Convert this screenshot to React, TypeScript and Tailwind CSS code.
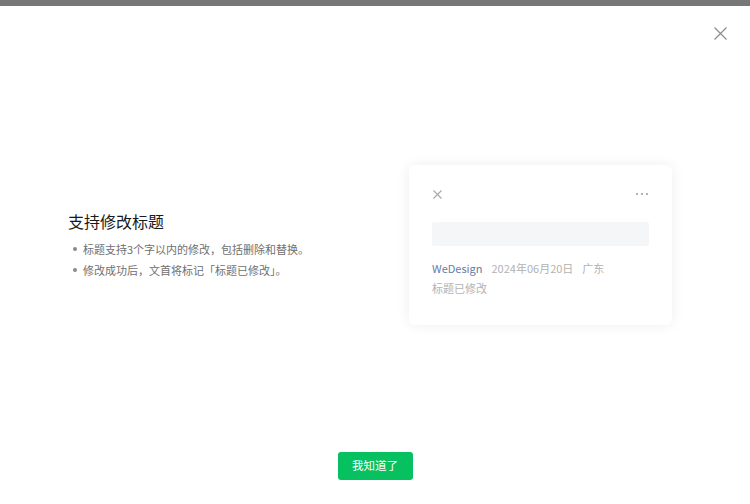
const FONT = { fontFamily: '"Noto Sans CJK SC", "Noto Sans", sans-serif' }

const TIPS = [
  '标题支持3个字以内的修改，包括删除和替换。',
  '修改成功后，文首将标记「标题已修改」。',
]

function Cross({ size, color, stroke }: { size: number; color: string; stroke: number }) {
  return (
    <svg width={size} height={size} viewBox={`0 0 ${size} ${size}`} fill="none">
      <path d={`M0.5 0.5L${size - 0.5} ${size - 0.5}M${size - 0.5} 0.5L0.5 ${size - 0.5}`} stroke={color} strokeWidth={stroke} />
    </svg>
  )
}

function PreviewCard() {
  return (
    <div className="w-[263px] rounded-[6px] bg-white pt-[24px] px-[23px] pb-[27px] shadow-[0_0_14px_rgba(0,0,0,0.07)]">
      <div className="flex items-center justify-between h-[10px]">
        <div className="ml-[1px]">
          <Cross size={9} color="#a8a8a8" stroke={1.1} />
        </div>
        <div className="flex gap-[3px] pr-[1px]">
          <span className="h-[2px] w-[2px] rounded-full bg-[#9a9a9a]" />
          <span className="h-[2px] w-[2px] rounded-full bg-[#9a9a9a]" />
          <span className="h-[2px] w-[2px] rounded-full bg-[#9a9a9a]" />
        </div>
      </div>
      <div className="mt-[23px] h-[24px] rounded-[2px] bg-[#f5f6f7]" />
      <div className="mt-[12px] text-[11px] leading-[20px]">
        <div className="flex">
          <span className="text-[#6a7ca3]">WeDesign</span>
          <span className="ml-[9px] text-[#b2b2b2]">2024年06月20日</span>
          <span className="ml-[9px] text-[#b2b2b2]">广东</span>
        </div>
        <div className="text-[#b2b2b2]">标题已修改</div>
      </div>
    </div>
  )
}

export default function App() {
  return (
    <div className="w-[750px] h-[504px] bg-white flex flex-col overflow-hidden" style={FONT}>
      <div className="h-[6px] bg-[#777777]" />

      {/* close */}
      <div className="flex justify-end pr-[23px] mt-[21px]">
        <Cross size={13} color="#8c8c8c" stroke={1.2} />
      </div>

      {/* content */}
      <div className="mt-[125px] flex items-center pl-[68px] pr-[78px]">
        <div className="flex-1">
          <h2 className="text-[16px] leading-[22px] text-[#1a1a1a]">支持修改标题</h2>
          <ul className="mt-[7px] text-[11px] leading-[21px] text-[#707070]">
            {TIPS.map((t) => (
              <li key={t} className="flex items-center">
                <span className="mr-[6px] ml-[5px] h-[4px] w-[4px] rounded-full bg-[#8a8a8a]" />
                {t}
              </li>
            ))}
          </ul>
        </div>
        <PreviewCard />
      </div>

      {/* footer */}
      <div className="mt-[127px] flex justify-center">
        <button className="h-[28px] w-[75px] rounded-[3px] bg-[#07c160] text-[11.5px] text-white">
          我知道了
        </button>
      </div>
    </div>
  )
}
